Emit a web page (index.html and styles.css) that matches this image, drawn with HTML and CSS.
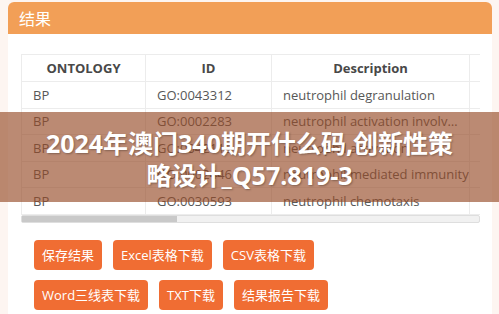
FILE: index.html
```html
<!DOCTYPE html>
<html>
<head>
<meta charset="utf-8">
<link rel="stylesheet" href="styles.css">
</head>
<body>
<div class="page">
  <div class="card">
    <div class="card-head">结果</div>
    <div class="card-body">
      <div class="table-wrap">
        <table class="grid">
          <colgroup>
            <col class="c1"><col class="c2"><col class="c3"><col class="c4">
          </colgroup>
          <thead>
            <tr><th>ONTOLOGY</th><th>ID</th><th>Description</th><th></th></tr>
          </thead>
          <tbody>
            <tr><td>BP</td><td>GO:0043312</td><td>neutrophil degranulation</td><td></td></tr>
            <tr><td>BP</td><td>GO:0002283</td><td><span class="ell">neutrophil activation involved in immune response</span></td><td></td></tr>
            <tr><td>BP</td><td>GO:0042119</td><td>neutrophil activation</td><td></td></tr>
            <tr><td>BP</td><td>GO:0002446</td><td>neutrophil mediated immunity</td><td></td></tr>
            <tr><td>BP</td><td>GO:0030593</td><td>neutrophil chemotaxis</td><td></td></tr>
          </tbody>
        </table>
      </div>
      <div class="scrollbar"><div class="thumb"></div></div>
      <div class="actions">
        <div class="row">
          <button class="btn">保存结果</button>
          <button class="btn">Excel表格下载</button>
          <button class="btn">CSV表格下载</button>
        </div>
        <div class="row">
          <button class="btn">Word三线表下载</button>
          <button class="btn">TXT下载</button>
          <button class="btn">结果报告下载</button>
        </div>
      </div>
    </div>
  </div>
</div>
<div class="banner">2024年澳门340期开什么码,创新性策<br>略设计_Q57.819-3</div>
</body>
</html>
```

FILE: styles.css
```css
html, body {
  margin: 0;
  padding: 0;
}
body {
  background: #fdf5f1;
  font-family: "Open Sans", "Noto Sans CJK SC", sans-serif;
  width: 499px;
  height: 314px;
  overflow: hidden;
  position: relative;
}
.page {
  padding: 2px 7px 0 8px;
}
.card {
  background: #ffffff;
  border-radius: 6px 6px 0 0;
  height: 312px;
}
.card-head {
  background: #f29f57;
  color: #ffffff;
  height: 32px;
  line-height: 32px;
  padding-left: 11px;
  font-size: 16px;
  font-family: "Noto Sans CJK SC", sans-serif;
  border-radius: 6px 6px 0 0;
}
.card-body {
  padding: 20px 12px 0 13px;
}
.table-wrap {
  width: 459px;
  overflow: hidden;
}
.grid {
  border-collapse: collapse;
  table-layout: fixed;
  width: 568px;
  font-size: 13px;
}
.c1 { width: 124px; }
.c2 { width: 126px; }
.c3 { width: 198px; }
.c4 { width: 120px; }
.grid th {
  height: 26px;
  padding: 0 11px;
  font-weight: 700;
  color: #484848;
  text-align: center;
  border: 1px solid #ececec;
}
.grid td {
  height: 25.5px;
  padding: 0 11px;
  color: #575757;
  border: 1px solid #ececec;
  white-space: nowrap;
  overflow: hidden;
}
.ell {
  display: block;
  overflow: hidden;
  text-overflow: ellipsis;
  white-space: nowrap;
}
.scrollbar {
  width: 457px;
  height: 6px;
  background: #f1f1f1;
  border: 1px solid #dedede;
  border-radius: 2px;
}
.thumb {
  width: 155px;
  height: 6px;
  background: #c9c9c9;
}
.actions {
  margin-top: 17px;
  padding-left: 13px;
  display: flex;
  flex-direction: column;
  gap: 10px;
}
.row {
  display: flex;
  gap: 11px;
}
.btn {
  height: 30px;
  padding: 0 8px;
  border: none;
  border-radius: 4px;
  background: #f06d33;
  color: #ffffff;
  font-size: 13px;
  font-family: "Open Sans", "Noto Sans CJK SC", sans-serif;
  line-height: 30px;
}
.banner {
  position: absolute;
  left: 0;
  top: 112px;
  width: 499px;
  height: 90px;
  box-sizing: border-box;
  padding-top: 15px;
  background: rgba(150, 75, 40, 0.65);
  color: #ffffff;
  font-family: "Open Sans", "Noto Sans CJK SC", sans-serif;
  font-weight: 700;
  font-size: 25px;
  line-height: 32px;
  text-align: center;
  text-shadow: 1px 1px 2px rgba(0, 0, 0, 0.3);
}
```
